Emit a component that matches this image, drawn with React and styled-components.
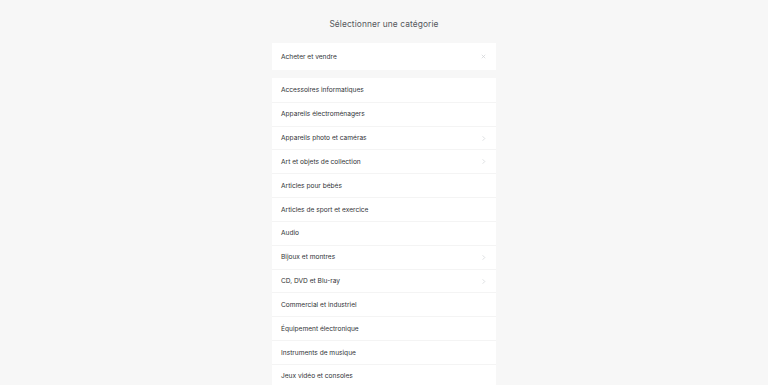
import React from "react";
import styled, { createGlobalStyle } from "styled-components";

const Global = createGlobalStyle`
  html, body { margin: 0; padding: 0; background: #f7f7f7; }
  body { font-family: Inter, "Noto Sans", sans-serif; color: #1c1e21; overflow: hidden; }
`;

const Page = styled.div`
  width: 768px;
  height: 385px;
  overflow: hidden;
  display: flex;
  flex-direction: column;
  align-items: center;
  background: #f7f7f7;
`;

const Title = styled.h1`
  flex: none;
  margin: 0;
  padding-top: 18px;
  height: 25px;
  font-size: 8.4px;
  font-weight: 400;
  color: #55585d;
  line-height: 12px;
  letter-spacing: 0.1px;
`;

const Card = styled.div`
  flex: none;
  width: 224px;
  background: #fff;
  margin-top: ${(p) => p.$mt}px;
  display: flex;
  flex-direction: column;
`;

const Row = styled.div`
  flex: none;
  height: ${(p) => p.$h || 23.83}px;
  box-sizing: border-box;
  padding: 0 9px;
  display: flex;
  align-items: center;
  justify-content: space-between;
  font-size: 6.6px;
  font-weight: 400;
  color: #303236;
  border-top: ${(p) => (p.$first ? "none" : "1px solid #f4f4f4")};
`;

const Icon = styled.svg`
  width: 7px;
  height: 7px;
  flex: none;
`;

const Chevron = () => (
  <Icon viewBox="0 0 8 8">
    <path d="M3 1.5 L5.5 4 L3 6.5" fill="none" stroke="#cfd1d4" strokeWidth="0.8" />
  </Icon>
);

const Close = () => (
  <Icon viewBox="0 0 8 8">
    <path d="M2 2 L6 6 M6 2 L2 6" fill="none" stroke="#cfd1d4" strokeWidth="0.8" />
  </Icon>
);

const items = [
  ["Accessoires informatiques", false],
  ["Appareils électroménagers", false],
  ["Appareils photo et caméras", true],
  ["Art et objets de collection", true],
  ["Articles pour bébés", false],
  ["Articles de sport et exercice", false],
  ["Audio", false],
  ["Bijoux et montres", true],
  ["CD, DVD et Blu-ray", true],
  ["Commercial et industriel", false],
  ["Équipement électronique", false],
  ["Instruments de musique", false],
  ["Jeux vidéo et consoles", false],
];

export default function App() {
  return (
    <Page>
      <Global />
      <Title>Sélectionner une catégorie</Title>
      <Card $mt={0}>
        <Row $first $h={27}>
          <span>Acheter et vendre</span>
          <Close />
        </Row>
      </Card>
      <Card $mt={8}>
        {items.map(([label, sub], i) => (
          <Row key={label} $first={i === 0}>
            <span>{label}</span>
            {sub && <Chevron />}
          </Row>
        ))}
      </Card>
    </Page>
  );
}
